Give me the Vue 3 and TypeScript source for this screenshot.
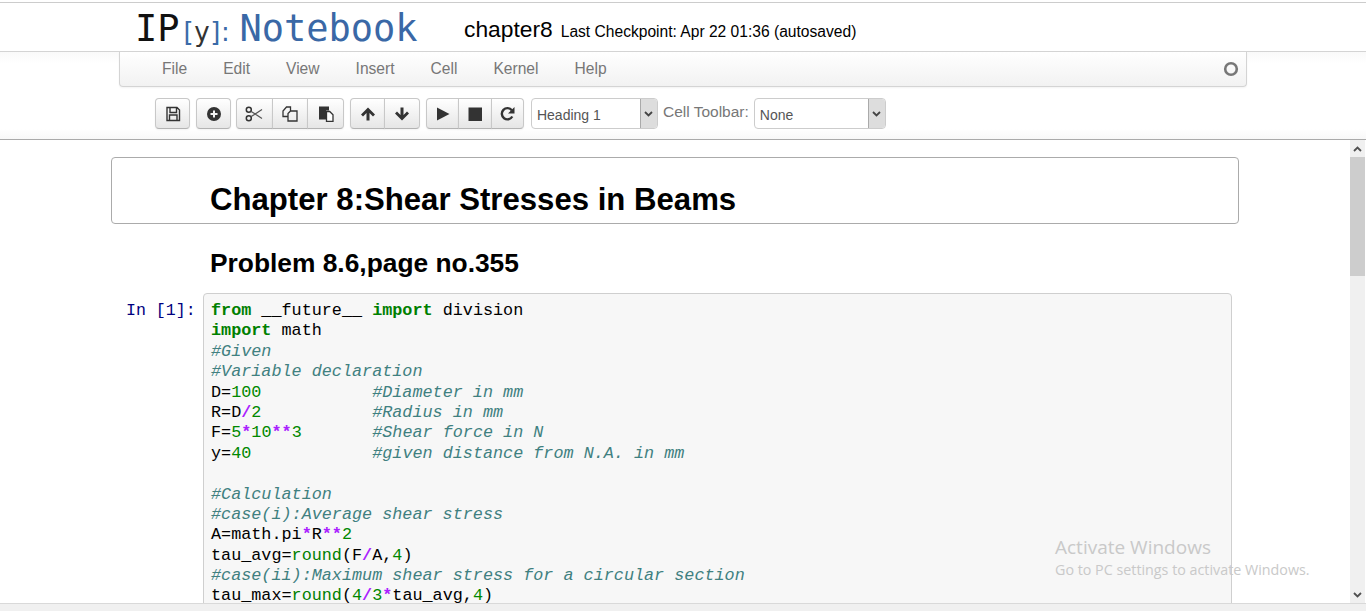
<script setup lang="ts">
type Tok = [string, string];
const k = (s: string): Tok => ['kw', s];
const c = (s: string): Tok => ['cm', s];
const n = (s: string): Tok => ['nm', s];
const o = (s: string): Tok => ['op', s];
const t = (s: string): Tok => ['', s];
const b = (s: string): Tok => ['bi', s];

const menu = ['File', 'Edit', 'View', 'Insert', 'Cell', 'Kernel', 'Help'];
const lines: Tok[][] = [
  [k('from'), t(' __future__ '), k('import'), t(' division')],
  [k('import'), t(' math')],
  [c('#Given')],
  [c('#Variable declaration')],
  [t('D='), n('100'), t('           '), c('#Diameter in mm')],
  [t('R=D'), o('/'), n('2'), t('           '), c('#Radius in mm')],
  [t('F='), n('5'), o('*'), n('10'), o('**'), n('3'), t('       '), c('#Shear force in N')],
  [t('y='), n('40'), t('            '), c('#given distance from N.A. in mm')],
  [t(' ')],
  [c('#Calculation')],
  [c('#case(i):Average shear stress')],
  [t('A=math.pi'), o('*'), t('R'), o('**'), n('2')],
  [t('tau_avg='), b('round'), t('(F'), o('/'), t('A,'), n('4'), t(')')],
  [c('#case(ii):Maximum shear stress for a circular section')],
  [t('tau_max='), b('round'), t('('), n('4'), o('/'), n('3'), o('*'), t('tau_avg,'), n('4'), t(')')],
];
</script>

<template>
  <div class="page">
    <header class="header">
      <div class="logo">
        <span class="ip">IP</span><span class="bracket">[<span class="y">y</span>]:</span><span class="nb">Notebook</span>
      </div>
      <span class="title">chapter8</span>
      <span class="checkpoint">Last Checkpoint: Apr 22 01:36 (autosaved)</span>
    </header>

    <div class="chrome">
      <nav class="menubar">
        <span v-for="m in menu" :key="m" class="menu-item">{{ m }}</span>
        <svg class="kernel" width="16" height="16" viewBox="0 0 16 16">
          <circle cx="8" cy="8" r="5.8" fill="none" stroke="#777" stroke-width="2.6" />
        </svg>
      </nav>

      <div class="toolbar">
        <div class="group">
          <button class="btn">
            <svg width="16" height="16" viewBox="0 0 16 16"><path d="M2 1.500h10l2.500 2.500v10.500h-12.500z M5 2v4.500h6.500V2 M4.500 14v-5h7.500v5" fill="none" stroke="#333" stroke-width="1.400" /></svg>
          </button>
        </div>
        <div class="group tight">
          <button class="btn">
            <svg width="16" height="16" viewBox="0 0 16 16"><path fill-rule="evenodd" d="M8 1a7 7 0 1 0 0 14A7 7 0 0 0 8 1zM7 4.500h2V7h2.500v2H9v2.500H7V9H4.500V7H7z" fill="#333" /></svg>
          </button>
        </div>
        <div class="group edit">
          <button class="btn">
            <svg width="18" height="16" viewBox="0 0 18 16"><circle cx="3.800" cy="3.800" r="2.500" fill="none" stroke="#333" stroke-width="1.500" /><circle cx="3.800" cy="12.200" r="2.500" fill="none" stroke="#333" stroke-width="1.500" /><path d="M5.800 5.200 17 12.500M5.800 10.800 17 3.500" fill="none" stroke="#555" stroke-width="1.200" /></svg>
          </button>
          <button class="btn">
            <svg width="16" height="16" viewBox="0 0 16 16"><path d="M5.500 10.500H1V5l3.500-4H8.500v3.500M6 15V7.500l2.500-2.500h6.500v10H6z" fill="none" stroke="#333" stroke-width="1.300" /></svg>
          </button>
          <button class="btn">
            <svg width="16" height="16" viewBox="0 0 16 16"><path d="M1 .5h10v4H8v9H1z" fill="#333" /><path d="M8.500 5.500h3.200l3.300 3.300v6.700H8.500z" fill="#fff" stroke="#333" stroke-width="1.300" /></svg>
          </button>
        </div>
        <div class="group move">
          <button class="btn">
            <svg width="16" height="16" viewBox="0 0 16 16"><path d="M8 1.500 15 8.500 13 10.500 9.500 7v7.500h-3V7L3 10.500 1 8.500z" fill="#333" /></svg>
          </button>
          <button class="btn">
            <svg width="16" height="16" viewBox="0 0 16 16"><path d="M8 14.500 15 7.500 13 5.500 9.500 9V1.500h-3V9L3 5.500 1 7.500z" fill="#333" /></svg>
          </button>
        </div>
        <div class="group run">
          <button class="btn">
            <svg width="16" height="16" viewBox="0 0 16 16"><path d="M2 1.500 14.500 8 2 14.500z" fill="#333" /></svg>
          </button>
          <button class="btn">
            <svg width="16" height="16" viewBox="0 0 16 16"><path d="M1.500 1.500h13.500v13.500H1.500z" fill="#333" /></svg>
          </button>
          <button class="btn">
            <svg width="16" height="16" viewBox="-1 0 16 16"><path d="M12.300 10.500A5.600 5.600 0 1 1 11.800 4.200" fill="none" stroke="#333" stroke-width="2.400" /><path d="M14.500 1v6.500H8z" fill="#333" /></svg>
          </button>
        </div>
        <div class="select heading-select">
          <span class="sel-text">Heading 1</span>
          <span class="arrow"><svg width="9" height="6" viewBox="0 0 9 6"><path d="M1 1l3.500 3.500L8 1" fill="none" stroke="#444" stroke-width="1.800" /></svg></span>
        </div>
        <span class="cell-label">Cell Toolbar:</span>
        <div class="select none-select">
          <span class="sel-text">None</span>
          <span class="arrow"><svg width="9" height="6" viewBox="0 0 9 6"><path d="M1 1l3.500 3.500L8 1" fill="none" stroke="#444" stroke-width="1.800" /></svg></span>
        </div>
      </div>
    </div>

    <div class="viewport">
      <main class="notebook">
        <div class="h1-cell"><h1>Chapter 8:Shear Stresses in Beams</h1></div>
        <h2>Problem 8.6,page no.355</h2>
        <div class="code-cell">
          <div class="prompt">In [1]:</div>
          <pre class="code"><div v-for="(line, i) in lines" :key="i" class="line"><span v-for="(tok, j) in line" :key="j" :class="tok[0]">{{ tok[1] }}</span></div></pre>
        </div>
      </main>
      <aside class="scrollbar">
        <div class="sb-btn">
          <svg width="9" height="6" viewBox="0 0 9 6"><path d="M1 5l3.500-3.500L8 5" fill="none" stroke="#505050" stroke-width="1.800" /></svg>
        </div>
        <div class="sb-thumb"></div>
        <div class="sb-track"></div>
        <div class="sb-btn">
          <svg width="9" height="6" viewBox="0 0 9 6"><path d="M1 1l3.500 3.500L8 1" fill="none" stroke="#505050" stroke-width="1.800" /></svg>
        </div>
      </aside>
    </div>

    <div class="hbar"></div>

    <div class="activate">
      <div class="a1">Activate Windows</div>
      <div class="a2">Go to PC settings to activate Windows.</div>
    </div>
  </div>
</template>

<style>
html, body { margin: 0; padding: 0; background: #fff; overflow: hidden; }
</style>

<style scoped>
.page {
  width: 1366px;
  height: 611px;
  display: flex;
  flex-direction: column;
  overflow: hidden;
  position: relative;
  background: #fff;
  font-family: "Liberation Sans", Arial, sans-serif;
}
.header {
  flex: none;
  height: 48px;
  margin-top: 2px;
  border-top: 1px solid #ccc;
  border-bottom: 1px solid #d4d4d4;
  display: flex;
  align-items: center;
  padding-left: 135px;
  box-sizing: content-box;
  white-space: nowrap;
}
.logo { display: flex; align-items: baseline; width: 329px; margin-top: 2px; }
.ip { font-family: "DejaVu Sans Mono", monospace; font-size: 37px; color: #111; }
.bracket { font-family: "DejaVu Sans", sans-serif; font-size: 26px; color: #3a6ba8; margin-left: 4px; letter-spacing: 0.6px; }
.y { color: #333; }
.nb { font-family: "DejaVu Sans Mono", monospace; font-size: 37px; color: #3a68a6; margin-left: 9px; }
.title { font-size: 22.800px; color: #000; margin-top: 5px; }
.checkpoint { font-size: 15.600px; color: #000; margin-left: 8px; margin-top: 10px; }
.chrome {
  flex: none;
  height: 87px;
  border-bottom: 1px solid #aaa;
  background: linear-gradient(#f9f9f9, #fff 12px, #fff 77px, #f8f8f8);
}
.menubar {
  margin: 0 119px;
  height: 35px;
  box-sizing: border-box;
  width: 1128px;
  display: flex;
  align-items: center;
  padding-left: 24px;
  border: 1px solid #d4d4d4;
  border-top: 0;
  border-radius: 0 0 4px 4px;
  background: linear-gradient(#fff, #f2f2f2);
  box-shadow: 0 1px 2px rgba(0, 0, 0, 0.05);
}
.menu-item { font-size: 15.600px; color: #777; padding: 0 18px; }
.kernel { margin-left: auto; margin-right: 7px; }
.toolbar {
  display: flex;
  align-items: flex-start;
  padding: 11px 0 0 155px;
}
.group { display: flex; margin-right: 6px; }
.group.tight { margin-right: 5px; }
.group.run { margin-right: 7px; }
.btn {
  width: 35px;
  height: 31px;
  padding: 0;
  display: flex;
  align-items: center;
  justify-content: center;
  border: 1px solid #c8c8c8;
  border-bottom-color: #b3b3b3;
  background: linear-gradient(#fff, #e6e6e6);
  box-shadow: inset 0 1px 0 rgba(255, 255, 255, 0.2), 0 1px 2px rgba(0, 0, 0, 0.05);
  margin-left: -1px;
}
.group .btn:first-child { margin-left: 0; border-radius: 4px 0 0 4px; }
.group .btn:last-child { border-radius: 0 4px 4px 0; }
.group .btn:only-child { border-radius: 4px; }
.edit .btn { width: 36.670px; }
.move .btn { width: 35.500px; }
.run .btn { width: 33.340px; }
.select {
  height: 31px;
  box-sizing: border-box;
  display: flex;
  align-items: center;
  justify-content: space-between;
  padding-left: 5px;
  font-size: 14px;
  color: #555;
  border: 1px solid #ccc;
  border-radius: 4px;
  background: #fff;
  overflow: hidden;
}
.sel-text { padding-top: 2px; }
.heading-select { width: 127px; }
.none-select { width: 132px; }
.arrow {
  width: 17px;
  height: 100%;
  box-sizing: border-box;
  display: flex;
  align-items: center;
  justify-content: center;
  background: #ddd;
  border-left: 1px solid #aaa;
}
.cell-label { font-size: 15.500px; color: #777; margin: 5px 5px 0 5px; white-space: nowrap; }
.viewport {
  flex: 1;
  min-height: 0;
  display: flex;
  overflow: hidden;
}
.notebook {
  flex: none;
  width: 1350px;
  box-sizing: border-box;
  padding: 17px 0 0 111px;
  overflow: hidden;
}
.h1-cell {
  width: 1128px;
  height: 67px;
  box-sizing: border-box;
  border: 1px solid #ababab;
  border-radius: 4px;
  padding: 23px 0 0 98px;
}
h1 {
  margin: 0;
  font-size: 31.150px;
  line-height: 38px;
  font-weight: 700;
  color: #000;
  white-space: nowrap;
}
h2 {
  margin: 23px 0 0 99px;
  font-size: 26.350px;
  line-height: 32px;
  font-weight: 700;
  color: #000;
}
.code-cell {
  display: flex;
  align-items: flex-start;
  margin-top: 14px;
}
.prompt {
  width: 92px;
  margin-top: 8px;
  padding-left: 15px;
  box-sizing: border-box;
  font-family: "Liberation Mono", monospace;
  font-size: 16.600px;
  line-height: 20.400px;
  color: #000080;
  white-space: nowrap;
}
.code {
  margin: 0;
  width: 1029px;
  box-sizing: border-box;
  padding: 7px 7px 8px;
  border: 1px solid #cfcfcf;
  border-radius: 4px;
  background: #f7f7f7;
  font-family: "Liberation Mono", monospace;
  font-size: 16.800px;
  line-height: 20.400px;
  color: #000;
  white-space: pre;
}
.line { height: 20.400px; }
.kw { color: #008000; font-weight: 700; }
.bi { color: #008000; }
.cm { color: #408080; font-style: italic; }
.nm { color: #008800; }
.op { color: #aa22ff; font-weight: 700; }
.scrollbar {
  flex: none;
  width: 15px;
  margin-right: 1px;
  display: flex;
  flex-direction: column;
  background: #f0f0f0;
}
.sb-btn {
  height: 17px;
  flex: none;
  display: flex;
  align-items: center;
  justify-content: center;
}
.sb-thumb { height: 119px; flex: none; background: #cdcdcd; }
.sb-track { flex: 1; }
.hbar {
  flex: none;
  height: 8px;
  background: #f0f0f0;
  border-top: 1px solid #d9d9d9;
  box-sizing: border-box;
}
.activate {
  position: absolute;
  left: 1055px;
  top: 535px;
  font-family: "Open Sans", sans-serif;
  white-space: nowrap;
  color: #c9c9c9;
  pointer-events: none;
}
.a1 { font-size: 19px; line-height: 25px; }
.a2 { font-size: 14.300px; line-height: 20px; }
</style>
